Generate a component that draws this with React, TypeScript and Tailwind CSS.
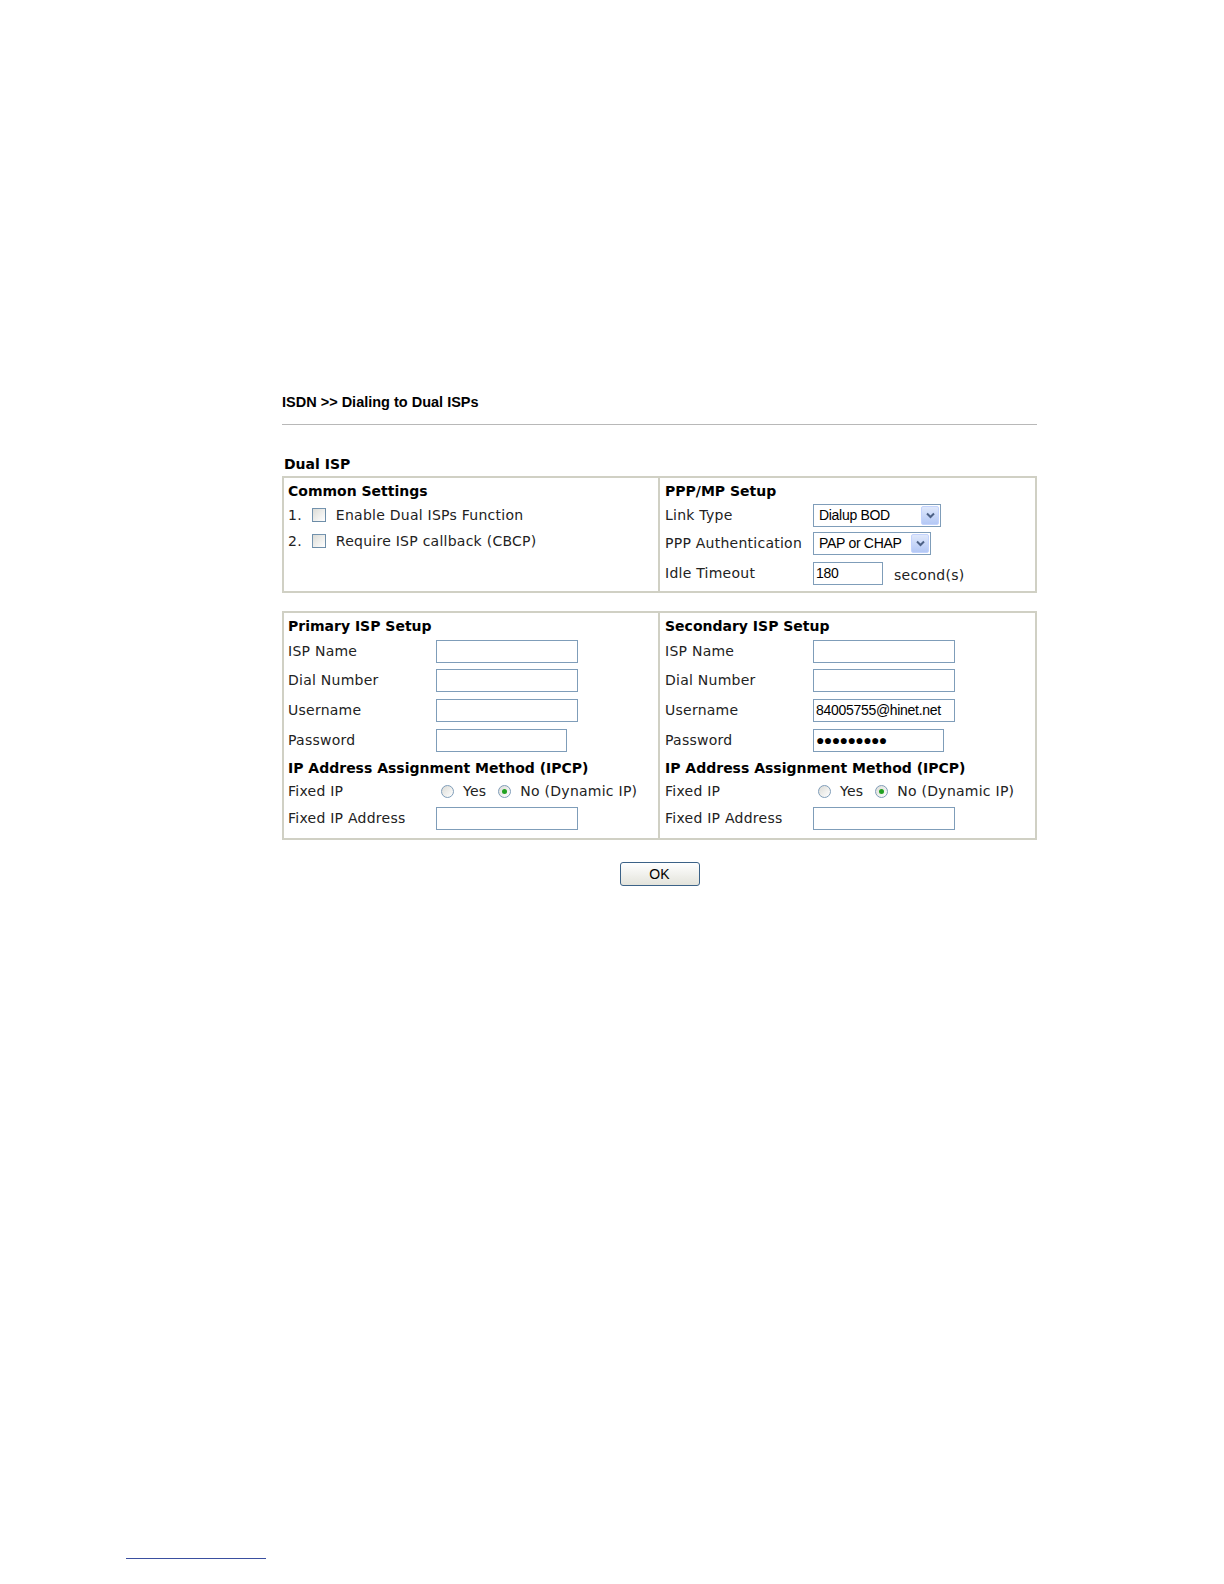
import React from 'react';

const verdana = { fontFamily: '"DejaVu Sans", Verdana, sans-serif' };
const arial = { fontFamily: '"Liberation Sans", Arial, sans-serif' };

function TextBox({ width = 'w-[142px]', value, dots }: { width?: string; value?: string; dots?: boolean }) {
  return (
    <div
      className={`${width} h-[23px] border border-[#7f9db9] bg-white flex items-center px-[2px] text-[14px] tracking-[-0.3px] text-black`}
      style={arial}
    >
      {dots ? <span className="text-[14px] tracking-[-0.6px] leading-none">●●●●●●●●●</span> : value}
    </div>
  );
}

function Select({ width, value }: { width: string; value: string }) {
  return (
    <div className={`${width} h-[23px] border border-[#7f9db9] bg-white flex items-center justify-between pl-[5px] pr-[1px]`}>
      <span className="text-[14px] tracking-[-0.3px] text-black" style={arial}>{value}</span>
      <span className="w-[18px] h-[19px] rounded-[2px] bg-gradient-to-b from-[#dfe8fb] to-[#b4c8f5] border border-[#c3d3fd] flex items-center justify-center">
        <svg width="9" height="7" viewBox="0 0 9 7">
          <path d="M1 1.5 L4.5 5 L8 1.5" fill="none" stroke="#4d6185" strokeWidth="2" />
        </svg>
      </span>
    </div>
  );
}

function CheckBox() {
  return (
    <span className="inline-block w-[14px] h-[14px] border border-[#1c5180]/60 bg-gradient-to-br from-[#dcdcd7] to-[#ffffff]" />
  );
}

function Radio({ checked }: { checked?: boolean }) {
  return (
    <span className="w-[13px] h-[13px] rounded-full border border-[#7f9db9] bg-gradient-to-br from-[#dcdcd7] to-white flex items-center justify-center">
      {checked && <span className="w-[5px] h-[5px] rounded-full bg-[#21a121]" />}
    </span>
  );
}

function Row({ label, children, h = 'h-[30px]' }: { label: string; children?: React.ReactNode; h?: string }) {
  return (
    <div className={`flex items-center ${h}`}>
      <span className="w-[148px] shrink-0">{label}</span>
      {children}
    </div>
  );
}

function IspSetup({ title, username, password }: { title: string; username?: string; password?: boolean }) {
  return (
    <div className="pt-[2px] pb-[2px]">
      <div className="h-[22px] flex items-center font-bold tracking-normal text-black">{title}</div>
      <Row label="ISP Name" h="h-[28px]"><TextBox /></Row>
      <Row label="Dial Number"><TextBox /></Row>
      <Row label="Username"><TextBox value={username} /></Row>
      <Row label="Password"><TextBox width="w-[131px]" dots={password} /></Row>
      <div className="h-[24px] pt-[2px] flex items-center font-bold tracking-normal text-black">IP Address Assignment Method (IPCP)</div>
      <Row label="Fixed IP" h="h-[25px]">
        <div className="flex items-center pl-[5px]">
          <Radio />
          <span className="ml-[9px]">Yes</span>
          <span className="ml-[12px]"><Radio checked /></span>
          <span className="ml-[9px]">No (Dynamic IP)</span>
        </div>
      </Row>
      <Row label="Fixed IP Address" h="h-[29px]"><TextBox /></Row>
    </div>
  );
}

export default function App() {
  return (
    <div className="w-[1224px] h-[1584px] bg-white relative text-[14px] tracking-[0.25px] text-[#222]" style={verdana}>
      <div className="ml-[282px] w-[755px] pt-[393px]">
        {/* Title */}
        <div className="h-[20px] flex items-center text-[14.5px] tracking-normal font-bold text-black" style={arial}>
          ISDN &gt;&gt; Dialing to Dual ISPs
        </div>
        <div className="mt-[11px] border-t border-[#b8b8b8]" />

        <div className="mt-[29px] h-[20px] flex items-center pl-[2px] font-bold tracking-normal text-black">Dual ISP</div>

        {/* Common / PPP */}
        <div className="mt-[2px] h-[117px] border-2 border-[#d0d0c4] grid grid-cols-[376px_1fr]">
          <div className="border-r-2 border-[#d0d0c4] pl-[4px] pt-[2px]">
            <div className="h-[22px] flex items-center font-bold tracking-normal text-black">Common Settings</div>
            <div className="h-[26px] flex items-center gap-[10px]">
              <span>1.</span><CheckBox /><span>Enable Dual ISPs Function</span>
            </div>
            <div className="h-[26px] flex items-center gap-[10px]">
              <span>2.</span><CheckBox /><span>Require ISP callback (CBCP)</span>
            </div>
          </div>
          <div className="pl-[5px] pt-[2px]">
            <div className="h-[22px] flex items-center font-bold tracking-normal text-black">PPP/MP Setup</div>
            <Row label="Link Type" h="h-[26px]"><Select width="w-[128px]" value="Dialup BOD" /></Row>
            <Row label="PPP Authentication" h="h-[30px]"><Select width="w-[118px]" value="PAP or CHAP" /></Row>
            <Row label="Idle Timeout" h="h-[30px]">
              <TextBox width="w-[70px]" value="180" />
              <span className="ml-[11px] mt-[4px]">second(s)</span>
            </Row>
          </div>
        </div>

        {/* Primary / Secondary */}
        <div className="mt-[18px] h-[229px] border-2 border-[#d0d0c4] grid grid-cols-[376px_1fr]">
          <div className="border-r-2 border-[#d0d0c4] pl-[4px]">
            <IspSetup title="Primary ISP Setup" />
          </div>
          <div className="pl-[5px]">
            <IspSetup title="Secondary ISP Setup" username="84005755@hinet.net" password />
          </div>
        </div>

        <div className="mt-[22px] flex justify-center">
          <button
            className="w-[80px] h-[24px] rounded-[3px] border border-[#3c6287] bg-gradient-to-b from-white to-[#e3e3db] text-[14px] text-black"
            style={arial}
          >
            OK
          </button>
        </div>
      </div>

      <div className="absolute left-[126px] top-[1558px] w-[140px] border-t border-[#3a4fa0]" />
    </div>
  );
}
